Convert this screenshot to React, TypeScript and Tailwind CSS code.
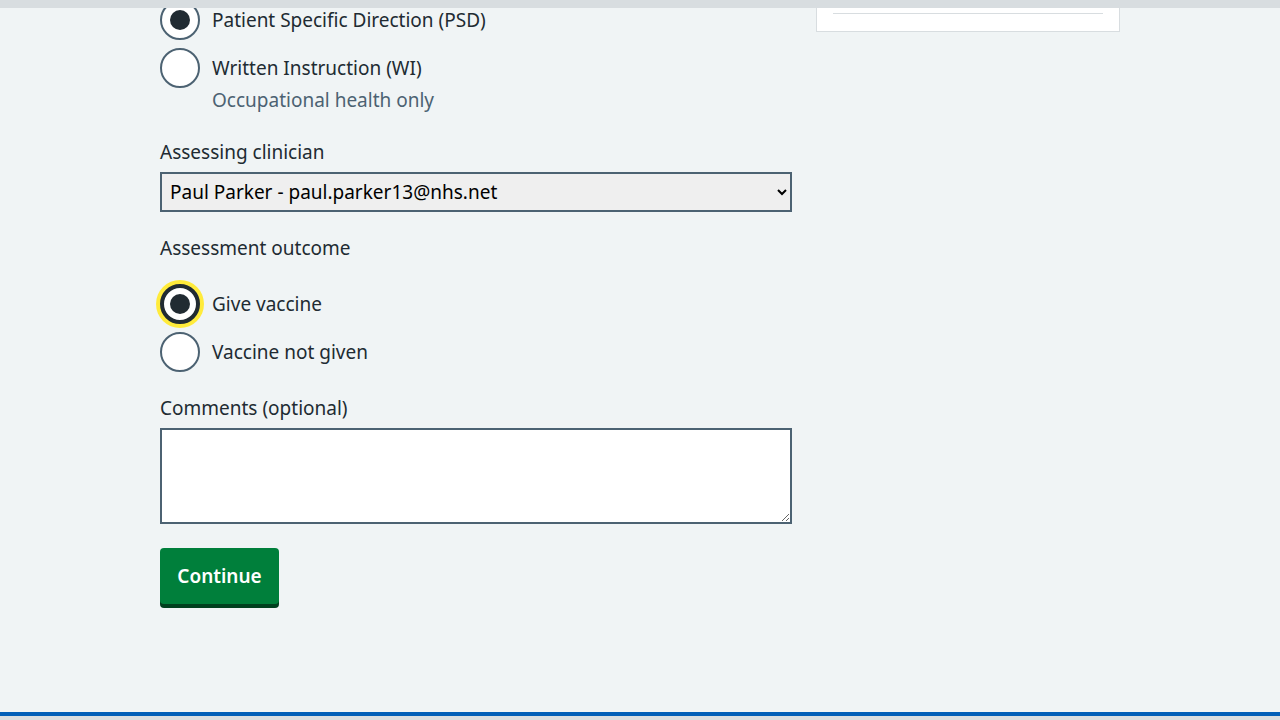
import React from "react";

function Radio({ label, checked, focused, hint }: { label: string; checked?: boolean; focused?: boolean; hint?: string }) {
  return (
    <div className="flex flex-col">
      <div className="flex h-10 items-center gap-3">
        <span
          className={
            focused
              ? "flex h-10 w-10 shrink-0 items-center justify-center rounded-full border-4 border-[#212b32] bg-white shadow-[0_0_0_4px_#ffeb3b]"
              : "flex h-10 w-10 shrink-0 items-center justify-center rounded-full border-2 border-[#4c6272] bg-white"
          }
        >
          {checked ? <span className="h-5 w-5 rounded-full bg-[#212b32]" /> : null}
        </span>
        <span className="text-[19px] leading-6 text-[#212b32]">{label}</span>
      </div>
      {hint ? <p className="ml-[52px] h-6 text-[19px] leading-6 text-[#4c6272]">{hint}</p> : null}
    </div>
  );
}

export default function App() {
  return (
    <div className="relative min-h-[720px] bg-[#f0f4f5] font-['Noto_Sans',sans-serif]">
      <div className="fixed left-0 right-0 top-0 z-10 h-2 bg-[#d8dde0]" />

      <div className="mx-auto flex h-[712px] w-[960px] gap-4">
        <form className="flex w-[632px] flex-col">
          <div className="flex flex-col gap-2">
            <Radio label="Patient Specific Direction (PSD)" checked />
            <Radio label="Written Instruction (WI)" hint="Occupational health only" />
          </div>

          <label className="mt-7 h-6 text-[19px] leading-6 text-[#212b32]">Assessing clinician</label>
          <select className="mt-2 h-10 w-full border-2 border-[#4c6272] bg-[#efefef] pl-1 pr-2 text-[19px] text-black" defaultValue="paul">
            <option value="paul">Paul Parker - paul.parker13@nhs.net</option>
          </select>

          <p className="mt-6 h-6 text-[19px] leading-6 text-[#212b32]">Assessment outcome</p>
          <div className="mt-6 flex flex-col gap-2">
            <Radio label="Give vaccine" checked focused />
            <Radio label="Vaccine not given" />
          </div>

          <label className="mt-6 h-6 text-[19px] leading-6 text-[#212b32]">Comments (optional)</label>
          <textarea className="mt-2 h-24 w-full border-2 border-[#4c6272] bg-white p-1 text-[19px]" />

          <div className="mt-6">
            <button
              className="h-14 w-[119px] rounded-[4px] bg-[#007f3b] text-center text-[19px] font-semibold text-white shadow-[0_4px_0_#00401e]"
              type="button"
            >
              Continue
            </button>
          </div>
        </form>

        <aside className="ml-2 w-[304px]">
          <div className="h-8 border border-t-0 border-[#d8dde0] bg-white px-4 pt-[13px]">
            <div className="h-px bg-[#d8dde0]" />
          </div>
        </aside>
      </div>

      <div className="h-1 bg-[#005eb8]" />
      <div className="h-1 bg-[#d8dde0]" />
    </div>
  );
}
